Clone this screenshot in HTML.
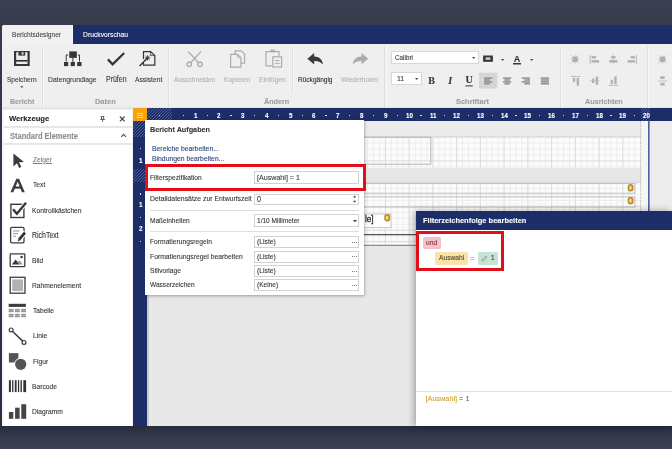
<!DOCTYPE html>
<html>
<head>
<meta charset="utf-8">
<style>
*{box-sizing:border-box;margin:0;padding:0}
html,body{width:672px;height:449px;overflow:hidden}
body{font-family:"Liberation Sans",sans-serif;background:linear-gradient(#3c4152 0,#363b4c 25px,#2a2f40 425px,#282d3d 427px,#353b4d 437px,#3a4052 449px);position:relative}
#root{position:absolute;left:0;top:0;width:672px;height:449px;will-change:transform}
.a{position:absolute}
.t{position:absolute;white-space:nowrap;line-height:10px;height:10px;transform-origin:0 50%;-webkit-text-stroke:0.1px currentColor}
</style>
</head>
<body>
<div id="root">
<div class="a" style="left:2.00px;top:24.70px;width:670.00px;height:401.30px;background:#efefef;"></div>
<div class="a" style="left:2.00px;top:24.70px;width:670.00px;height:19.30px;background:#1c2d68;"></div>
<div class="a" style="left:2.20px;top:24.90px;width:70.80px;height:20.00px;background:#f1f1f1;border-radius:1.5px 0 0 0;border-right:1px solid #fafafa;"></div>
<div class="t" style="left:11.60px;top:30.20px;font-size:7.67px;color:#444;transform:scaleX(0.860);">Berichtsdesigner</div>
<div class="t" style="left:82.60px;top:30.20px;font-size:7.86px;color:#fff;transform:scaleX(0.860);">Druckvorschau</div>
<div class="a" style="left:2.00px;top:107.20px;width:670.00px;height:1.00px;background:#e6e6e6;"></div>
<div class="a" style="left:42.30px;top:45.50px;width:1.10px;height:62.50px;background:#dfdfdf;"></div>
<div class="a" style="left:43.40px;top:45.50px;width:0.90px;height:62.50px;background:#f6f6f6;"></div>
<div class="a" style="left:167.90px;top:45.50px;width:1.10px;height:62.50px;background:#dfdfdf;"></div>
<div class="a" style="left:169.00px;top:45.50px;width:0.90px;height:62.50px;background:#f6f6f6;"></div>
<div class="a" style="left:384.40px;top:45.50px;width:1.10px;height:62.50px;background:#dfdfdf;"></div>
<div class="a" style="left:385.50px;top:45.50px;width:0.90px;height:62.50px;background:#f6f6f6;"></div>
<div class="a" style="left:560.00px;top:45.50px;width:1.10px;height:62.50px;background:#dfdfdf;"></div>
<div class="a" style="left:561.10px;top:45.50px;width:0.90px;height:62.50px;background:#f6f6f6;"></div>
<div class="a" style="left:647.20px;top:45.50px;width:1.10px;height:62.50px;background:#dfdfdf;"></div>
<div class="a" style="left:648.30px;top:45.50px;width:0.90px;height:62.50px;background:#f6f6f6;"></div>
<div class="a" style="left:291.50px;top:47.00px;width:1.10px;height:46.00px;background:#dfdfdf;"></div>
<div class="a" style="left:292.60px;top:47.00px;width:0.90px;height:46.00px;background:#f6f6f6;"></div>
<div class="t" style="left:7.00px;top:74.70px;font-size:7.64px;color:#3a3a3a;transform:scaleX(0.860);">Speichern</div>
<div class="t" style="left:48.30px;top:74.70px;font-size:7.96px;color:#3a3a3a;transform:scaleX(0.860);">Datengrundlage</div>
<div class="t" style="left:105.60px;top:74.70px;font-size:8.13px;color:#3a3a3a;transform:scaleX(0.860);">Prüfen</div>
<div class="t" style="left:134.70px;top:74.70px;font-size:7.82px;color:#3a3a3a;transform:scaleX(0.860);">Assistent</div>
<div class="t" style="left:174.40px;top:74.70px;font-size:7.63px;color:#b0b0b0;transform:scaleX(0.860);">Ausschneiden</div>
<div class="t" style="left:224.20px;top:74.70px;font-size:7.70px;color:#b0b0b0;transform:scaleX(0.860);">Kopieren</div>
<div class="t" style="left:259.40px;top:74.70px;font-size:7.89px;color:#b0b0b0;transform:scaleX(0.860);">Einfügen</div>
<div class="t" style="left:297.50px;top:74.70px;font-size:7.60px;color:#2a2a2a;transform:scaleX(0.860);">Rückgängig</div>
<div class="t" style="left:341.20px;top:74.70px;font-size:7.66px;color:#b0b0b0;transform:scaleX(0.860);">Wiederholen</div>
<div class="t" style="left:9.70px;top:96.80px;font-size:7.27px;color:#9c9c9c;transform:scaleX(0.970);font-weight:bold;">Bericht</div>
<div class="t" style="left:95.00px;top:96.80px;font-size:7.68px;color:#9c9c9c;transform:scaleX(0.970);font-weight:bold;">Daten</div>
<div class="t" style="left:263.70px;top:96.80px;font-size:7.45px;color:#9c9c9c;transform:scaleX(0.970);font-weight:bold;">Ändern</div>
<div class="t" style="left:455.80px;top:96.80px;font-size:7.68px;color:#9c9c9c;transform:scaleX(0.970);font-weight:bold;">Schriftart</div>
<div class="t" style="left:584.60px;top:96.80px;font-size:7.46px;color:#9c9c9c;transform:scaleX(0.970);font-weight:bold;">Ausrichten</div>
<svg class="a" style="left:20.1px;top:86px" width="3.6" height="2.2" viewBox="0 0 5 3"><path d="M0.3 0.3H4.7L2.5 2.7Z" fill="#444"/></svg>
<svg class="a" style="left:0;top:44px" width="672" height="64" viewBox="0 44 672 64">
<!-- save -->
<g fill="none" stroke="#363636">
<path d="M15.1 51V65H28.6V51" stroke-width="2.2"/>
<path d="M15 51.6H18.4M25.2 51.6H28.7" stroke-width="1.2"/>
<path d="M16 60.8H27.6" stroke-width="1.7"/>
</g>
<rect x="18.4" y="51" width="6.8" height="4.6" fill="#363636"/>
<rect x="21.6" y="52.3" width="2" height="2.2" fill="#e6e6e6"/>
<!-- datengrundlage -->
<g fill="#363636">
<rect x="69.3" y="51.4" width="7.5" height="6.5"/>
<rect x="64" y="62" width="4.2" height="4.1"/>
<rect x="70.7" y="62" width="4.2" height="4.1"/>
<rect x="77.2" y="62" width="4.3" height="4.1"/>
</g>
<path d="M68.3 55H66.2V61.5M77.8 55H79.5V61.5M72.9 58V62" fill="none" stroke="#363636" stroke-width="1"/>
<!-- check -->
<path d="M107.9 59.4L112.6 64.3L124.2 53" fill="none" stroke="#363636" stroke-width="2.3"/>
<!-- assistent -->
<path d="M143.5 59V51.6H150.6L154.8 55.6V65.2H143.5V63" fill="none" stroke="#363636" stroke-width="1.2"/>
<path d="M150.6 51.6V55.6H154.8" fill="none" stroke="#363636" stroke-width="0.8"/>
<path d="M139.6 66L147.4 58" stroke="#2a2a2a" stroke-width="1.3"/>
<path d="M147.6 55.2V60.6M144.9 57.9H150.3M145.7 56L149.5 59.8M149.5 56L145.7 59.8" stroke="#2a2a2a" stroke-width="0.8"/>
<!-- scissors -->
<g fill="none" stroke="#a4a4a4" stroke-width="1.2">
<path d="M188.2 51.6L198.3 62.4M201 51.6L190.9 62.4"/>
<circle cx="189.2" cy="64.3" r="2.2"/><circle cx="200" cy="64.3" r="2.2"/>
</g>
<!-- copy -->
<g fill="none" stroke="#acacac" stroke-width="1.2">
<path d="M235 54V50.8H241.2L244.6 54V63.2H241.4"/>
<path d="M230.6 54.4H237.5L240.9 57.8V67.2H230.6Z" fill="#efefef"/>
<path d="M237.5 54.4V57.8H240.9" stroke-width="0.8"/>
</g>
<!-- paste -->
<g fill="none" stroke="#acacac" stroke-width="1.2">
<path d="M272 65.8H266V51.6H279V56"/>
<rect x="270.3" y="49.6" width="4.6" height="2.6" fill="#acacac" stroke="none"/>
<rect x="272.8" y="56.8" width="8.8" height="10.2" fill="#efefef"/>
<path d="M275 60.5H279.6M275 63.3H279.6" stroke-width="1"/>
</g>
<!-- undo / redo -->
<path d="M307.4 58.7L314.2 52.9V56.4C319.3 56.5 322.6 59.6 322.9 64.6C320.6 61.6 317.6 60.8 314.2 60.9V64.5Z" fill="#3a3a3a"/>
<path d="M368.3 58.7L361.5 52.9V56.4C356.4 56.5 353.1 59.6 352.8 64.6C355.1 61.6 358.1 60.8 361.5 60.9V64.5Z" fill="#acacac"/>
<!-- ab highlight -->
<rect x="483.1" y="55.5" width="9.8" height="6.3" fill="#363636"/>
<rect x="485.6" y="57.4" width="4.8" height="2.4" fill="#cfcfcf"/>
<!-- A underline -->
<rect x="513" y="63" width="8" height="1.5" fill="#363636"/>
<!-- U underline -->
<rect x="465.4" y="85.4" width="7.4" height="1" fill="#363636"/>
<!-- selected align box -->
<rect x="479" y="72.7" width="18.4" height="15.9" fill="#d6d6d6"/>
<g fill="#868686">
<!-- left -->
<rect x="484.2" y="77.4" width="8.2" height="1.35"/><rect x="484.2" y="79.3" width="5.6" height="1.35"/><rect x="484.2" y="81.2" width="8.2" height="1.35"/><rect x="484.2" y="83.1" width="5.6" height="1.35"/>
<!-- center -->
<rect x="503" y="77.4" width="8.2" height="1.35"/><rect x="504.4" y="79.3" width="5.4" height="1.35"/><rect x="503" y="81.2" width="8.2" height="1.35"/><rect x="504.4" y="83.1" width="5.4" height="1.35"/>
<!-- right -->
<rect x="521.8" y="77.4" width="8.2" height="1.35"/><rect x="524.4" y="79.3" width="5.6" height="1.35"/><rect x="521.8" y="81.2" width="8.2" height="1.35"/><rect x="524.4" y="83.1" width="5.6" height="1.35"/>
<!-- justify -->
<rect x="540.8" y="77.4" width="8.2" height="1.35"/><rect x="540.8" y="79.3" width="8.2" height="1.35"/><rect x="540.8" y="81.2" width="8.2" height="1.35"/><rect x="540.8" y="83.1" width="8.2" height="1.35"/>
</g>
<!-- ausrichten icons -->
<g stroke="#b2b2b2" stroke-width="0.9" fill="#b2b2b2">
<rect x="572.4" y="56.5" width="5.4" height="5.6" fill="#b0b0b0" stroke="none"/><path d="M572.4 56.5 L570.6 54.7 M577.8 56.5 L579.6 54.7 M572.4 62.1 L570.6 63.9 M577.8 62.1 L579.6 63.9 M575.1 56.5V54.5 M575.1 62.1V64.1 M572.4 59.3H570.4 M577.8 59.3H579.8" fill="none" stroke="#c0c0c0" stroke-width="0.6"/>
<path d="M590.1 54.8V63.9" fill="none"/>
<rect x="591.5" y="56.1" width="4.6" height="2.4" stroke="none"/><rect x="591.5" y="60.1" width="7.6" height="2.5" stroke="none"/>
<path d="M613.2 54.6V64.2" fill="none" stroke-width="0.6"/>
<rect x="611" y="56.1" width="4.5" height="2.3" stroke="none"/><rect x="609.2" y="60.1" width="8.2" height="2.5" stroke="none"/>
<path d="M636.6 54.8V63.9" fill="none"/>
<rect x="630.6" y="56.1" width="4.6" height="2.4" stroke="none"/><rect x="627.6" y="60.1" width="7.6" height="2.5" stroke="none"/>
<path d="M570.8 76.6H580.2" fill="none"/>
<rect x="572.9" y="78" width="2.3" height="4.2" stroke="none"/><rect x="576.6" y="78" width="2.5" height="7.6" stroke="none"/>
<path d="M589.8 80.7H599.4" fill="none" stroke-width="0.6"/>
<rect x="591.9" y="78.5" width="2.3" height="4.5" stroke="none"/><rect x="595.6" y="76.6" width="2.5" height="8.3" stroke="none"/>
<path d="M608.8 85.3H618.2" fill="none"/>
<rect x="610.6" y="79.8" width="2.3" height="4.2" stroke="none"/><rect x="614.2" y="76.4" width="2.5" height="7.6" stroke="none"/>
<rect x="659.8" y="56.5" width="5.4" height="5.6" fill="#b0b0b0" stroke="none"/><path d="M659.8 56.5 L658.0 54.7 M665.2 56.5 L667.0 54.7 M659.8 62.1 L658.0 63.9 M665.2 62.1 L667.0 63.9 M662.5 56.5V54.5 M662.5 62.1V64.1 M659.8 59.3H657.8 M665.2 59.3H667.2" fill="none" stroke="#c0c0c0" stroke-width="0.6"/>
<path d="M657.8 81H667.2" fill="none" stroke-width="0.7"/>
<rect x="660.2" y="76.2" width="4.5" height="2.8" stroke="none"/><rect x="660.2" y="82.8" width="4.5" height="2.8" stroke="none"/>
</g>
</svg>
<div class="t" style="left:428.3px;top:75.6px;font-family:'Liberation Serif',serif;font-weight:bold;font-size:10px;color:#363636">B</div>
<div class="t" style="left:448.2px;top:75.6px;font-family:'Liberation Serif',serif;font-weight:bold;font-style:italic;font-size:10px;color:#363636">I</div>
<div class="t" style="left:465.4px;top:75.4px;font-family:'Liberation Serif',serif;font-weight:bold;font-size:10px;color:#363636">U</div>
<div class="t" style="left:513.7px;top:53.9px;font-family:'Liberation Sans',sans-serif;font-weight:bold;font-size:9px;color:#363636">A</div>

<div class="a" style="left:391.00px;top:51.20px;width:87.50px;height:12.60px;background:#fff;border:1px solid #d8d8d8;"></div>
<div class="t" style="left:395.00px;top:52.60px;font-size:7.39px;color:#333;transform:scaleX(0.860);">Calibri</div>
<div class="a" style="left:391.00px;top:72.30px;width:31.20px;height:13.00px;background:#fff;border:1px solid #d8d8d8;"></div>
<div class="t" style="left:396.50px;top:74.30px;font-size:8.06px;color:#333;transform:scaleX(0.860);">11</div>
<svg class="a" style="left:471.65px;top:56.81px" width="3.3" height="1.98" viewBox="0 0 4 2.4"><path d="M0 0H4L2 2.4Z" fill="#555"/></svg>
<svg class="a" style="left:415.15px;top:78.31px" width="3.3" height="1.98" viewBox="0 0 4 2.4"><path d="M0 0H4L2 2.4Z" fill="#555"/></svg>
<svg class="a" style="left:501.05px;top:58.71px" width="3.3" height="1.98" viewBox="0 0 4 2.4"><path d="M0 0H4L2 2.4Z" fill="#555"/></svg>
<svg class="a" style="left:529.95px;top:58.71px" width="3.3" height="1.98" viewBox="0 0 4 2.4"><path d="M0 0H4L2 2.4Z" fill="#555"/></svg>
<div class="a" style="left:2.00px;top:108.20px;width:131.20px;height:1.30px;background:#e4e4e4;"></div>
<div class="a" style="left:2.00px;top:109.50px;width:131.20px;height:316.50px;background:#fff;"></div>
<div class="a" style="left:131.60px;top:109.50px;width:1.70px;height:316.50px;background:#f1f1f1;"></div>
<div class="a" style="left:2.00px;top:109.50px;width:1.60px;height:316.50px;background:#f6f6f6;"></div>
<div class="t" style="left:8.70px;top:113.80px;font-size:7.90px;color:#222;transform:scaleX(0.970);font-weight:bold;">Werkzeuge</div>
<div class="a" style="left:3.60px;top:126.10px;width:128.00px;height:1.70px;background:#e7e7e7;"></div>
<div class="t" style="left:9.80px;top:130.90px;font-size:8.83px;color:#8c8c8c;transform:scaleX(0.850);font-weight:bold;">Standard Elemente</div>
<div class="a" style="left:3.60px;top:143.00px;width:128.00px;height:1.70px;background:#e7e7e7;"></div>
<div class="t" style="left:32.50px;top:154.70px;font-size:7.79px;color:#787878;transform:scaleX(0.860);text-decoration:underline;">Zeiger</div>
<div class="t" style="left:32.50px;top:180.40px;font-size:7.79px;color:#333;transform:scaleX(0.860);">Text</div>
<div class="t" style="left:31.80px;top:205.50px;font-size:7.80px;color:#333;transform:scaleX(0.860);">Kontrollkästchen</div>
<div class="t" style="left:31.80px;top:231.00px;font-size:8.13px;color:#333;transform:scaleX(0.860);">RichText</div>
<div class="t" style="left:31.80px;top:256.00px;font-size:7.79px;color:#333;transform:scaleX(0.860);">Bild</div>
<div class="t" style="left:31.80px;top:281.00px;font-size:7.77px;color:#333;transform:scaleX(0.860);">Rahmenelement</div>
<div class="t" style="left:32.50px;top:306.10px;font-size:7.71px;color:#333;transform:scaleX(0.860);">Tabelle</div>
<div class="t" style="left:32.50px;top:331.40px;font-size:7.79px;color:#333;transform:scaleX(0.860);">Linie</div>
<div class="t" style="left:32.50px;top:356.60px;font-size:7.79px;color:#333;transform:scaleX(0.860);">Figur</div>
<div class="t" style="left:32.40px;top:381.50px;font-size:7.79px;color:#333;transform:scaleX(0.860);">Barcode</div>
<div class="t" style="left:32.30px;top:406.90px;font-size:7.79px;color:#333;transform:scaleX(0.860);">Diagramm</div>
<svg class="a" style="left:4px;top:148px" width="128" height="278" viewBox="4 148 128 278">
<g fill="#3c3c3c">
<!-- pointer -->
<path d="M13.4 153.4V166.4L16.9 163.2L19.2 167.9L21.3 166.9L19 162.3L24 162.1Z"/>
</g>
<!-- checkbox -->
<rect x="10.9" y="204.3" width="13" height="13.2" fill="none" stroke="#3c3c3c" stroke-width="1.4"/>
<path d="M12.9 209L16.9 213.8L26 202.6" fill="none" stroke="#fff" stroke-width="4.2"/>
<path d="M13 209.2L16.9 213.8L26 202.8" fill="none" stroke="#333" stroke-width="2.3"/>
<!-- richtext -->
<rect x="10.6" y="227.3" width="13.4" height="15.6" rx="1.3" fill="none" stroke="#3c3c3c" stroke-width="1.3"/>
<path d="M13 231H19.6M13 233.6H18M13 236.2H16" stroke="#8a8a8a" stroke-width="0.9"/>
<path d="M25.2 232.2L18.2 240.4" stroke="#fff" stroke-width="5"/>
<path d="M25 232.6L19.2 239.4" stroke="#333" stroke-width="2.8"/>
<path d="M19.2 238L17.3 241.6L20.9 240Z" fill="#333"/>
<!-- bild -->
<rect x="10.2" y="253.9" width="14.6" height="12.8" rx="0.8" fill="none" stroke="#3c3c3c" stroke-width="1.3"/>
<path d="M11.8 264.6L15.6 259.4L19.6 264.6Z" fill="#3c3c3c"/>
<path d="M17.8 261.8L19.8 260.4L23 264.6H19.6Z" fill="#999"/>
<circle cx="21.6" cy="257" r="1.3" fill="#3c3c3c"/>
<!-- rahmen -->
<rect x="10.2" y="277.3" width="14.8" height="15.9" fill="none" stroke="#3c3c3c" stroke-width="1.3"/>
<rect x="12.2" y="279.4" width="10.8" height="11.7" fill="#b2b2b2"/>
<!-- tabelle -->
<rect x="8.7" y="303.8" width="17.2" height="3.1" fill="#3c3c3c"/>
<g fill="#8e8e8e">
<rect x="8.7" y="308.9" width="4.9" height="3.3"/><rect x="15" y="308.9" width="4.7" height="3.3"/><rect x="21.2" y="308.9" width="4.7" height="3.3"/>
<rect x="8.7" y="313.9" width="4.9" height="3.3"/><rect x="15" y="313.9" width="4.7" height="3.3"/><rect x="21.2" y="313.9" width="4.7" height="3.3"/>
</g>
<path d="M8.7 310.55H25.9M8.7 315.55H25.9" stroke="#d8d8d8" stroke-width="0.5"/>
<!-- linie -->
<path d="M12.4 331.2L22.7 341.1" stroke="#3c3c3c" stroke-width="1.5"/>
<circle cx="11.1" cy="329.9" r="1.9" fill="#fff" stroke="#3c3c3c" stroke-width="1.2"/>
<circle cx="24" cy="342.4" r="1.9" fill="#fff" stroke="#3c3c3c" stroke-width="1.2"/>
<!-- figur -->
<rect x="8.9" y="353.1" width="9.5" height="9.4" fill="#555"/>
<circle cx="20.7" cy="364.3" r="6.5" fill="#fff"/>
<circle cx="20.7" cy="364.3" r="5.6" fill="#555"/>
<!-- barcode -->
<g fill="#333">
<rect x="8.9" y="380.2" width="2" height="11.9"/><rect x="12.1" y="380.2" width="1.3" height="11.9"/><rect x="14.8" y="380.2" width="1.8" height="11.9"/>
<rect x="17.9" y="380.2" width="1.3" height="11.9"/><rect x="20.5" y="380.2" width="1.4" height="11.9"/><rect x="23.3" y="380.2" width="2.8" height="11.9"/>
</g>
<!-- diagramm -->
<g fill="#444">
<rect x="8.9" y="412" width="4.4" height="6.8"/><rect x="15.1" y="407.7" width="4.5" height="11.1"/><rect x="21.3" y="404.2" width="4.9" height="14.6"/>
</g>
</svg>
<svg class="a" style="left:98px;top:112px" width="34" height="30" viewBox="98 112 34 30">
<path d="M119.9 116.5L124.6 121.3M124.6 116.5L119.9 121.3" stroke="#444" stroke-width="1.15" fill="none"/>
<path d="M100.8 116.7H104.2M100.3 119.4H104.9" stroke="#555" stroke-width="1" fill="none"/>
<path d="M101.5 116.7V119.4M103.6 116.7V119.4" stroke="#555" stroke-width="0.9" fill="none"/>
<path d="M102.6 119.4V121.8" stroke="#555" stroke-width="0.9" fill="none"/>
<path d="M121.3 136.9L123.6 134.4L125.9 136.9" stroke="#555" stroke-width="1.2" fill="none"/>
</svg>
<div class="t" style="left:11.1px;top:176.2px;font-size:18.6px;line-height:19px;height:19px;color:#3a3a3a;transform:scaleX(1.07);transform-origin:0 0;-webkit-text-stroke:0.7px #3a3a3a">A</div>

<div class="a" style="left:133.30px;top:108.20px;width:538.70px;height:12.80px;background:#1c2d68;"></div>
<div class="a" style="left:147.00px;top:108.20px;width:24.80px;height:12.80px;background:repeating-linear-gradient(135deg,#1c2d68 0,#1c2d68 1.1px,#4c5d97 1.1px,#4c5d97 2.1px);"></div>
<div class="a" style="left:641.00px;top:108.20px;width:8.60px;height:12.80px;background:repeating-linear-gradient(135deg,#1c2d68 0,#1c2d68 1.1px,#4c5d97 1.1px,#4c5d97 2.1px);"></div>
<div class="a" style="left:133.30px;top:121.00px;width:13.80px;height:305.00px;background:#1c2d68;"></div>
<div class="a" style="left:133.30px;top:121.00px;width:13.80px;height:16.40px;background:repeating-linear-gradient(135deg,#1c2d68 0,#1c2d68 1.1px,#4c5d97 1.1px,#4c5d97 2.1px);"></div>
<div class="a" style="left:133.30px;top:168.80px;width:13.80px;height:13.20px;background:repeating-linear-gradient(135deg,#1c2d68 0,#1c2d68 1.1px,#4c5d97 1.1px,#4c5d97 2.1px);"></div>
<div class="a" style="left:133.40px;top:108.00px;width:13.70px;height:13.10px;background:#f8a30d;"></div>
<div class="a" style="left:137.00px;top:113.00px;width:6.40px;height:1.10px;background:#f8e27c;"></div>
<div class="a" style="left:137.00px;top:115.10px;width:6.40px;height:1.10px;background:#f8e27c;"></div>
<div class="a" style="left:137.00px;top:117.20px;width:6.40px;height:1.10px;background:#f8e27c;"></div>
<div class="t" style="left:193.68px;top:110.60px;font-size:6.39px;color:#fff;transform:scaleX(0.970);font-weight:bold;">1</div>
<div class="a" style="left:183.00px;top:115.00px;width:1.20px;height:1.20px;background:#d8dcec;"></div>
<div class="t" style="left:217.42px;top:110.60px;font-size:6.39px;color:#fff;transform:scaleX(0.970);font-weight:bold;">2</div>
<div class="a" style="left:206.74px;top:115.00px;width:1.20px;height:1.20px;background:#d8dcec;"></div>
<div class="t" style="left:241.16px;top:110.60px;font-size:6.39px;color:#fff;transform:scaleX(0.970);font-weight:bold;">3</div>
<div class="a" style="left:230.48px;top:115.00px;width:1.20px;height:1.20px;background:#d8dcec;"></div>
<div class="t" style="left:264.90px;top:110.60px;font-size:6.39px;color:#fff;transform:scaleX(0.970);font-weight:bold;">4</div>
<div class="a" style="left:254.22px;top:115.00px;width:1.20px;height:1.20px;background:#d8dcec;"></div>
<div class="t" style="left:288.64px;top:110.60px;font-size:6.39px;color:#fff;transform:scaleX(0.970);font-weight:bold;">5</div>
<div class="a" style="left:277.96px;top:115.00px;width:1.20px;height:1.20px;background:#d8dcec;"></div>
<div class="t" style="left:312.38px;top:110.60px;font-size:6.39px;color:#fff;transform:scaleX(0.970);font-weight:bold;">6</div>
<div class="a" style="left:301.70px;top:115.00px;width:1.20px;height:1.20px;background:#d8dcec;"></div>
<div class="t" style="left:336.12px;top:110.60px;font-size:6.39px;color:#fff;transform:scaleX(0.970);font-weight:bold;">7</div>
<div class="a" style="left:325.44px;top:115.00px;width:1.20px;height:1.20px;background:#d8dcec;"></div>
<div class="t" style="left:359.86px;top:110.60px;font-size:6.39px;color:#fff;transform:scaleX(0.970);font-weight:bold;">8</div>
<div class="a" style="left:349.18px;top:115.00px;width:1.20px;height:1.20px;background:#d8dcec;"></div>
<div class="t" style="left:383.60px;top:110.60px;font-size:6.39px;color:#fff;transform:scaleX(0.970);font-weight:bold;">9</div>
<div class="a" style="left:372.92px;top:115.00px;width:1.20px;height:1.20px;background:#d8dcec;"></div>
<div class="t" style="left:405.61px;top:110.60px;font-size:6.39px;color:#fff;transform:scaleX(0.970);font-weight:bold;">10</div>
<div class="a" style="left:396.66px;top:115.00px;width:1.20px;height:1.20px;background:#d8dcec;"></div>
<div class="t" style="left:429.52px;top:110.60px;font-size:6.39px;color:#fff;transform:scaleX(0.970);font-weight:bold;">11</div>
<div class="a" style="left:420.40px;top:115.00px;width:1.20px;height:1.20px;background:#d8dcec;"></div>
<div class="t" style="left:453.09px;top:110.60px;font-size:6.39px;color:#fff;transform:scaleX(0.970);font-weight:bold;">12</div>
<div class="a" style="left:444.14px;top:115.00px;width:1.20px;height:1.20px;background:#d8dcec;"></div>
<div class="t" style="left:476.83px;top:110.60px;font-size:6.39px;color:#fff;transform:scaleX(0.970);font-weight:bold;">13</div>
<div class="a" style="left:467.88px;top:115.00px;width:1.20px;height:1.20px;background:#d8dcec;"></div>
<div class="t" style="left:500.57px;top:110.60px;font-size:6.39px;color:#fff;transform:scaleX(0.970);font-weight:bold;">14</div>
<div class="a" style="left:491.62px;top:115.00px;width:1.20px;height:1.20px;background:#d8dcec;"></div>
<div class="t" style="left:524.31px;top:110.60px;font-size:6.39px;color:#fff;transform:scaleX(0.970);font-weight:bold;">15</div>
<div class="a" style="left:515.36px;top:115.00px;width:1.20px;height:1.20px;background:#d8dcec;"></div>
<div class="t" style="left:548.05px;top:110.60px;font-size:6.39px;color:#fff;transform:scaleX(0.970);font-weight:bold;">16</div>
<div class="a" style="left:539.10px;top:115.00px;width:1.20px;height:1.20px;background:#d8dcec;"></div>
<div class="t" style="left:571.79px;top:110.60px;font-size:6.39px;color:#fff;transform:scaleX(0.970);font-weight:bold;">17</div>
<div class="a" style="left:562.84px;top:115.00px;width:1.20px;height:1.20px;background:#d8dcec;"></div>
<div class="t" style="left:595.53px;top:110.60px;font-size:6.39px;color:#fff;transform:scaleX(0.970);font-weight:bold;">18</div>
<div class="a" style="left:586.58px;top:115.00px;width:1.20px;height:1.20px;background:#d8dcec;"></div>
<div class="t" style="left:619.27px;top:110.60px;font-size:6.39px;color:#fff;transform:scaleX(0.970);font-weight:bold;">19</div>
<div class="a" style="left:610.32px;top:115.00px;width:1.20px;height:1.20px;background:#d8dcec;"></div>
<div class="t" style="left:643.01px;top:110.60px;font-size:6.39px;color:#fff;transform:scaleX(0.970);font-weight:bold;">20</div>
<div class="a" style="left:634.06px;top:115.00px;width:1.20px;height:1.20px;background:#d8dcec;"></div>
<div class="a" style="left:158.86px;top:115.00px;width:1.20px;height:1.20px;background:#d8dcec;"></div>
<div class="t" style="left:138.62px;top:155.50px;font-size:6.60px;color:#fff;transform:scaleX(0.970);font-weight:bold;">1</div>
<div class="t" style="left:138.62px;top:200.40px;font-size:6.60px;color:#fff;transform:scaleX(0.970);font-weight:bold;">1</div>
<div class="t" style="left:138.62px;top:224.40px;font-size:6.60px;color:#fff;transform:scaleX(0.970);font-weight:bold;">2</div>
<div class="a" style="left:139.80px;top:148.10px;width:1.20px;height:1.20px;background:#d8dcec;"></div>
<div class="a" style="left:139.80px;top:193.40px;width:1.20px;height:1.20px;background:#d8dcec;"></div>
<div class="a" style="left:139.80px;top:217.10px;width:1.20px;height:1.20px;background:#d8dcec;"></div>
<div class="a" style="left:139.80px;top:240.90px;width:1.20px;height:1.20px;background:#d8dcec;"></div>
<div class="a" style="left:147.10px;top:121.00px;width:525.00px;height:305.00px;background:#e8e8e8;"></div>
<svg class="a" style="left:147px;top:121px" width="525" height="305" viewBox="147 121 525 305">
<defs>
<pattern id="gm" x="171.26" y="136.7" width="5.935" height="5.935" patternUnits="userSpaceOnUse">
<path d="M0.4 0V5.935M0 0.4H5.935" stroke="#e9e9e9" stroke-width="0.8" fill="none"/>
</pattern>
<pattern id="gM" x="171.26" y="136.7" width="23.74" height="23.74" patternUnits="userSpaceOnUse">
<path d="M0.4 0V23.74M0 0.4H23.74" stroke="#d9d9d9" stroke-width="0.9" fill="none"/>
</pattern>
<pattern id="gm2" x="171.26" y="182.2" width="5.935" height="5.935" patternUnits="userSpaceOnUse">
<path d="M0.4 0V5.935M0 0.4H5.935" stroke="#e9e9e9" stroke-width="0.8" fill="none"/>
</pattern>
<pattern id="gM2" x="171.26" y="182.2" width="23.74" height="23.74" patternUnits="userSpaceOnUse">
<path d="M0.4 0V23.74M0 0.4H23.74" stroke="#d9d9d9" stroke-width="0.9" fill="none"/>
</pattern>
</defs>
<!-- page -->
<rect x="147" y="121" width="502" height="125" fill="#ebebeb"/>
<rect x="649.5" y="121" width="23" height="305" fill="#ececec"/>
<!-- band 1 grid -->
<rect x="147" y="136.7" width="501.5" height="32" fill="#fbfbfb"/>
<rect x="147" y="136.7" width="501.5" height="32" fill="url(#gm)"/>
<rect x="147" y="136.7" width="501.5" height="32" fill="url(#gM)"/>
<rect x="147" y="136.3" width="501.5" height="0.8" fill="#d6d6d6"/>
<rect x="147" y="168.5" width="501.5" height="0.8" fill="#d6d6d6"/>
<rect x="300" y="137.2" width="130.8" height="27" fill="none" stroke="#b4b4b4" stroke-width="1"/>
<!-- band 2 header -->
<rect x="147" y="169.3" width="501.5" height="12.7" fill="#e7e7e7"/>
<!-- band 2 grid -->
<rect x="147" y="182.2" width="501.5" height="63" fill="#fbfbfb"/>
<rect x="147" y="182.2" width="501.5" height="63" fill="url(#gm2)"/>
<rect x="147" y="182.2" width="501.5" height="63" fill="url(#gM2)"/>
<rect x="147" y="181.8" width="501.5" height="0.8" fill="#d6d6d6"/>
<rect x="300" y="183.6" width="335" height="9.6" fill="none" stroke="#b8b8b8" stroke-width="0.9"/>
<rect x="300" y="196.9" width="335" height="10.2" fill="none" stroke="#b8b8b8" stroke-width="0.9"/>
<rect x="300" y="214" width="91" height="13.6" fill="#fdfdfd" stroke="#c4c4c4" stroke-width="0.9"/>
<rect x="147" y="234.1" width="501.5" height="1.1" fill="#3c3c3c"/>
<rect x="147" y="241" width="501.5" height="0.8" fill="#d8d8d8"/>
<rect x="147" y="244.7" width="501.5" height="1.4" fill="#8092b2"/>
<!-- right margin -->
<path d="M640.8 121V246" stroke="#9a9a9a" stroke-width="0.8" stroke-dasharray="1.2 1.2" fill="none"/>
<rect x="641.3" y="121" width="7" height="125" fill="#f6f6f6"/>
<rect x="648" y="121" width="1.6" height="125" fill="#4660a0"/>
<!-- db icons -->
<rect x="628.2" y="184.6" width="4.8" height="6.4" rx="1.6" fill="#d9a220" stroke="#7a5a10" stroke-width="0.6"/><rect x="629.4" y="186.2" width="2.2" height="3.4" rx="0.8" fill="#f8dc78"/>
<rect x="628.2" y="197.5" width="4.8" height="6.4" rx="1.6" fill="#d9a220" stroke="#7a5a10" stroke-width="0.6"/><rect x="629.4" y="199.1" width="2.2" height="3.4" rx="0.8" fill="#f8dc78"/>
<rect x="384.8" y="214.5" width="4.8" height="6.4" rx="1.6" fill="#d9a220" stroke="#7a5a10" stroke-width="0.6"/><rect x="386.0" y="216.1" width="2.2" height="3.4" rx="0.8" fill="#f8dc78"/>
<!-- below page -->
<rect x="147" y="246.2" width="502.6" height="180" fill="#e8e8e8"/>
<rect x="147" y="121" width="2" height="305" fill="#c9cad2"/>
</svg>
<div class="t" style="left:365px;top:214.3px;font-size:8.2px;line-height:11px;height:11px;color:#2c2c2c;-webkit-text-stroke:0.3px #2c2c2c">le]</div>

<div class="a" style="left:145.00px;top:119.80px;width:219.40px;height:175.50px;background:#fff;box-shadow:0.5px 1px 3px rgba(0,0,0,.35);"></div>
<div class="t" style="left:150.40px;top:124.60px;font-size:7.46px;color:#333;transform:scaleX(0.970);font-weight:bold;">Bericht Aufgaben</div>
<div class="t" style="left:151.60px;top:144.30px;font-size:7.96px;color:#233f7c;transform:scaleX(0.860);">Bereiche bearbeiten...</div>
<div class="t" style="left:151.60px;top:154.40px;font-size:7.93px;color:#233f7c;transform:scaleX(0.860);">Bindungen bearbeiten...</div>
<div class="t" style="left:149.80px;top:172.80px;font-size:7.80px;color:#333;transform:scaleX(0.860);">Filterspezifikation</div>
<div class="t" style="left:149.80px;top:194.30px;font-size:7.98px;color:#333;transform:scaleX(0.860);">Detaildatensätze zur Entwurfszeit</div>
<div class="t" style="left:149.80px;top:215.70px;font-size:7.64px;color:#333;transform:scaleX(0.860);">Maßeinheiten</div>
<div class="t" style="left:149.80px;top:237.30px;font-size:7.81px;color:#333;transform:scaleX(0.860);">Formatierungsregeln</div>
<div class="t" style="left:149.80px;top:251.70px;font-size:7.90px;color:#333;transform:scaleX(0.860);">Formatierungsregel bearbeiten</div>
<div class="t" style="left:149.80px;top:266.10px;font-size:7.70px;color:#333;transform:scaleX(0.860);">Stilvorlage</div>
<div class="t" style="left:149.80px;top:280.40px;font-size:7.64px;color:#333;transform:scaleX(0.860);">Wasserzeichen</div>
<div class="a" style="left:149.80px;top:210.00px;width:209.50px;height:1.00px;background:#dedede;"></div>
<div class="a" style="left:149.80px;top:231.00px;width:209.50px;height:1.00px;background:#dedede;"></div>
<div class="a" style="left:253.60px;top:171.40px;width:105.70px;height:12.60px;background:#fff;border:1px solid #d2d2d2;"></div>
<div class="a" style="left:253.60px;top:193.70px;width:105.70px;height:11.70px;background:#fff;border:1px solid #d2d2d2;"></div>
<div class="a" style="left:253.60px;top:214.30px;width:105.70px;height:12.50px;background:#fff;border:1px solid #d2d2d2;"></div>
<div class="a" style="left:253.60px;top:236.00px;width:105.70px;height:11.90px;background:#fff;border:1px solid #d2d2d2;"></div>
<div class="a" style="left:253.60px;top:250.50px;width:105.70px;height:12.00px;background:#fff;border:1px solid #d2d2d2;"></div>
<div class="a" style="left:253.60px;top:264.60px;width:105.70px;height:12.20px;background:#fff;border:1px solid #d2d2d2;"></div>
<div class="a" style="left:253.60px;top:279.10px;width:105.70px;height:12.30px;background:#fff;border:1px solid #d2d2d2;"></div>
<div class="t" style="left:257.10px;top:173.20px;font-size:7.50px;color:#3a3a3a;transform:scaleX(0.950);">[Auswahl] = 1</div>
<div class="t" style="left:257.10px;top:194.30px;font-size:8.36px;color:#333;transform:scaleX(0.860);">0</div>
<div class="t" style="left:257.10px;top:215.90px;font-size:7.60px;color:#333;transform:scaleX(0.860);">1/10 Millimeter</div>
<div class="t" style="left:257.10px;top:237.30px;font-size:7.87px;color:#333;transform:scaleX(0.860);">(Liste)</div>
<div class="t" style="left:257.10px;top:251.70px;font-size:7.87px;color:#333;transform:scaleX(0.860);">(Liste)</div>
<div class="t" style="left:257.10px;top:266.00px;font-size:7.87px;color:#333;transform:scaleX(0.860);">(Liste)</div>
<div class="t" style="left:257.10px;top:280.40px;font-size:7.61px;color:#333;transform:scaleX(0.860);">(Keine)</div>
<div class="a" style="left:351.70px;top:241.90px;width:1.20px;height:1.20px;background:#555;border-radius:50%;"></div>
<div class="a" style="left:353.90px;top:241.90px;width:1.20px;height:1.20px;background:#555;border-radius:50%;"></div>
<div class="a" style="left:356.10px;top:241.90px;width:1.20px;height:1.20px;background:#555;border-radius:50%;"></div>
<div class="a" style="left:351.70px;top:256.30px;width:1.20px;height:1.20px;background:#555;border-radius:50%;"></div>
<div class="a" style="left:353.90px;top:256.30px;width:1.20px;height:1.20px;background:#555;border-radius:50%;"></div>
<div class="a" style="left:356.10px;top:256.30px;width:1.20px;height:1.20px;background:#555;border-radius:50%;"></div>
<div class="a" style="left:351.70px;top:270.60px;width:1.20px;height:1.20px;background:#555;border-radius:50%;"></div>
<div class="a" style="left:353.90px;top:270.60px;width:1.20px;height:1.20px;background:#555;border-radius:50%;"></div>
<div class="a" style="left:356.10px;top:270.60px;width:1.20px;height:1.20px;background:#555;border-radius:50%;"></div>
<div class="a" style="left:351.70px;top:285.00px;width:1.20px;height:1.20px;background:#555;border-radius:50%;"></div>
<div class="a" style="left:353.90px;top:285.00px;width:1.20px;height:1.20px;background:#555;border-radius:50%;"></div>
<div class="a" style="left:356.10px;top:285.00px;width:1.20px;height:1.20px;background:#555;border-radius:50%;"></div>
<svg class="a" style="left:352.50px;top:219.80px" width="4" height="2.4" viewBox="0 0 4 2.4"><path d="M0 0H4L2 2.4Z" fill="#444"/></svg>
<svg class="a" style="left:353px;top:195.2px" width="3.2" height="8.4" viewBox="0 0 4 9.4"><path d="M0 2.6L2 0.2L4 2.6Z M0 6.8H4L2 9.2Z" fill="#444"/></svg>
<div class="a" style="left:144.50px;top:164.40px;width:221.50px;height:27.10px;background:transparent;border:3.4px solid #e20f1b;"></div>
<div class="a" style="left:415.90px;top:211.30px;width:256.10px;height:214.70px;background:#fff;box-shadow:-2px 0 7px rgba(0,0,0,.32);"></div>
<div class="a" style="left:415.90px;top:211.30px;width:256.10px;height:18.40px;background:#1c2d68;"></div>
<div class="t" style="left:422.50px;top:215.70px;font-size:7.71px;color:#fff;transform:scaleX(0.970);font-weight:bold;">Filterzeichenfolge bearbeiten</div>
<div class="a" style="left:422.50px;top:236.80px;width:18.20px;height:12.50px;background:#f4c3c9;border-radius:1.5px;"></div>
<div class="t" style="left:426.00px;top:238.20px;font-size:7.74px;color:#7b2d3a;transform:scaleX(0.860);">und</div>
<div class="a" style="left:435.00px;top:251.80px;width:32.50px;height:13.00px;background:#fbe2aa;border-radius:1.5px;"></div>
<div class="t" style="left:438.60px;top:253.20px;font-size:7.78px;color:#4e4527;transform:scaleX(0.860);">Auswahl</div>
<div class="t" style="left:470.00px;top:253.40px;font-size:8.76px;color:#b0b0b0;transform:scaleX(0.860);">=</div>
<div class="a" style="left:477.50px;top:251.80px;width:20.40px;height:13.00px;background:#c8e3d4;border-radius:1.5px;"></div>
<div class="t" style="left:490.80px;top:253.30px;font-size:7.53px;color:#1e3328;transform:scaleX(0.860);">1</div>
<svg class="a" style="left:480.6px;top:254.8px" width="7" height="7" viewBox="0 0 7 7"><path d="M1 6L1.3 4.5L4.8 1L6 2.2L2.5 5.7Z" fill="none" stroke="#6d8c7a" stroke-width="0.7"/></svg>
<div class="a" style="left:416.25px;top:230.90px;width:87.50px;height:40.50px;background:transparent;border:3.4px solid #e20f1b;"></div>
<div class="a" style="left:416.00px;top:391.40px;width:256.00px;height:1.00px;background:#e0e0e0;"></div>
<div class="t" style="left:425.50px;top:394.30px;font-size:7.29px;color:#d3a127;">[Auswahl]</div>
<div class="t" style="left:459.20px;top:394.30px;font-size:6.51px;color:#444;">=</div>
<div class="t" style="left:465.70px;top:394.30px;font-size:6.65px;color:#2c7d4c;">1</div>
</div>
</body>
</html>
